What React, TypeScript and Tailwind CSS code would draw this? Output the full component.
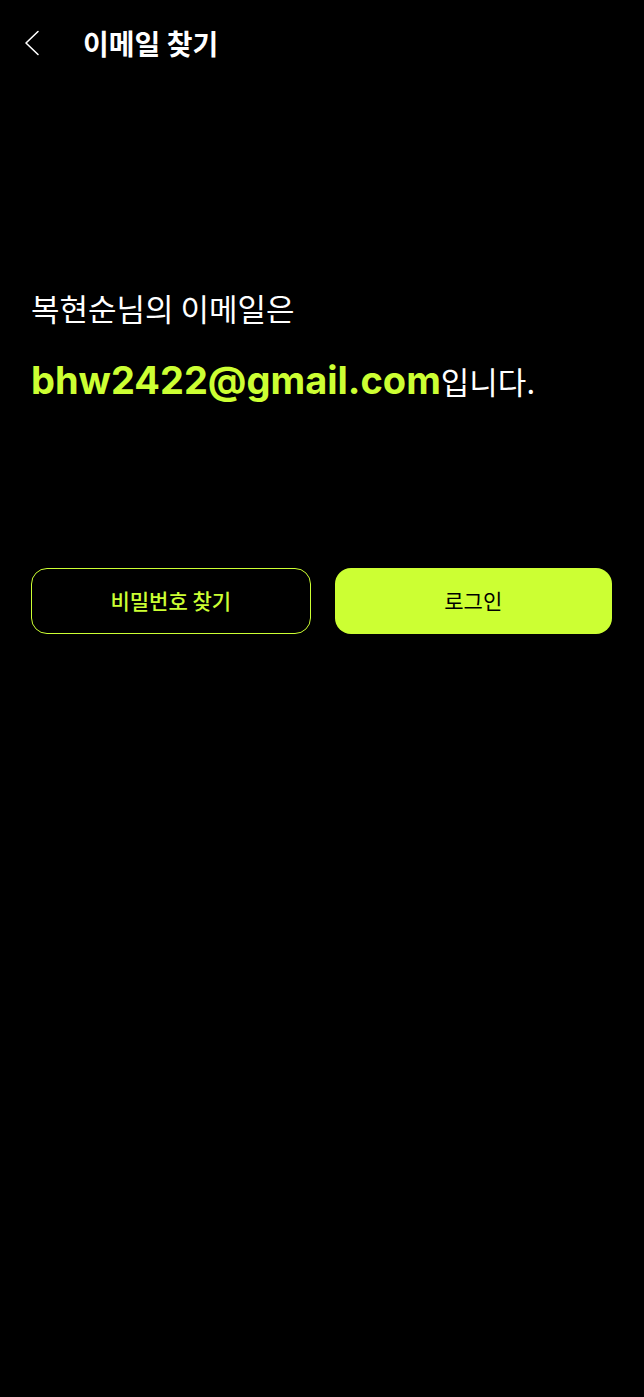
const FindEmailResult = () => {
  return (
    <div className="min-h-screen bg-black text-white font-['Inter','Noto_Sans_CJK_KR',sans-serif]">
      <header className="flex items-center h-[86px] pl-[22px]">
        <button className="w-[20px] h-[28px] flex items-center justify-center">
          <svg width="18" height="26" viewBox="0 0 18 26" fill="none">
            <polyline
              points="15,1.5 3,13 15,24.5"
              stroke="white"
              strokeWidth="1.6"
              strokeLinecap="round"
              strokeLinejoin="round"
            />
          </svg>
        </button>
        <h1 className="ml-[41px] text-[28px] font-bold font-['Noto_Sans_CJK_KR',sans-serif]">
          이메일 찾기
        </h1>
      </header>
      <div className="pl-[31px] pr-[32px] pt-[196px]">
        <p className="text-[31px] font-normal leading-[52px] font-['Noto_Sans_CJK_KR',sans-serif]">
          복현순님의 이메일은
        </p>
        <p className="mt-[18px] text-[38px] leading-[56px]">
          <span className="font-bold text-[#ccff33]">bhw2422@gmail.com</span>
          <span className="font-['Noto_Sans_CJK_KR',sans-serif] text-[31px]">입니다.</span>
        </p>
        <div className="mt-[159px] flex gap-[24px]">
          <button className="flex-1 h-[66px] rounded-[16px] border border-[#ccff33] text-[#ccff33] text-[21px] font-medium font-['Noto_Sans_CJK_KR',sans-serif]">
            비밀번호 찾기
          </button>
          <button className="flex-1 h-[66px] rounded-[16px] bg-[#ccff33] text-black text-[21px] font-normal font-['Noto_Sans_CJK_KR',sans-serif]">
            로그인
          </button>
        </div>
      </div>
    </div>
  );
};

export default function App() {
  return <FindEmailResult />;
}
